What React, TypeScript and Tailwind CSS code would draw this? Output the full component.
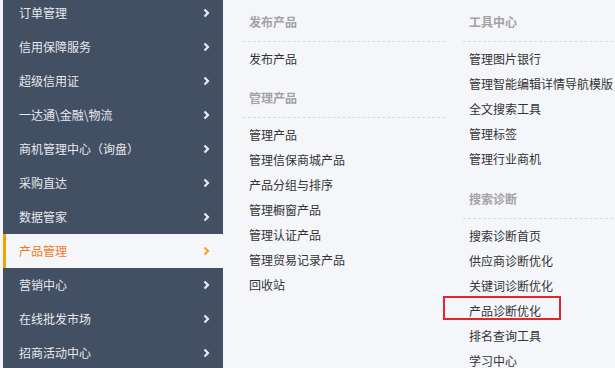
import React from 'react';

const menu = [
  '订单管理',
  '信用保障服务',
  '超级信用证',
  '一达通\\金融\\物流',
  '商机管理中心（询盘）',
  '采购直达',
  '数据管家',
  '产品管理',
  '营销中心',
  '在线批发市场',
  '招商活动中心',
];

const activeIndex = 7;

interface Section {
  title: string;
  items: string[];
}

const col2: Section[] = [
  { title: '发布产品', items: ['发布产品'] },
  {
    title: '管理产品',
    items: ['管理产品', '管理信保商城产品', '产品分组与排序', '管理橱窗产品', '管理认证产品', '管理贸易记录产品', '回收站'],
  },
];

const col3: Section[] = [
  { title: '工具中心', items: ['管理图片银行', '管理智能编辑详情导航模版', '全文搜索工具', '管理标签', '管理行业商机'] },
  {
    title: '搜索诊断',
    items: ['搜索诊断首页', '供应商诊断优化', '关键词诊断优化', '产品诊断优化', '排名查询工具', '学习中心'],
  },
];

const highlighted = '产品诊断优化';

const Chevron: React.FC<{ active?: boolean }> = ({ active }) => (
  <svg width="7" height="10" viewBox="0 0 7 10" className="shrink-0">
    <polyline
      points="1.5,1.5 5,5 1.5,8.5"
      fill="none"
      stroke={active ? '#f5a623' : '#e8ebf0'}
      strokeWidth="2.2"
    />
  </svg>
);

const MenuColumn: React.FC<{ sections: Section[]; gap: string; width: string }> = ({ sections, gap, width }) => (
  <div className={`flex flex-col ${width}`}>
    {sections.map((section, si) => (
      <div key={section.title} className={si > 0 ? gap : ''}>
        <div className="pt-[12px] pb-[9px] pl-[6px] border-b border-dashed border-[#d9dbe0] text-[12px] leading-[20px] font-bold text-[#a3a3a3]">
          {section.title}
        </div>
        <ul className="pt-[4px]">
          {section.items.map(item => (
            <li key={item} className="relative pl-[6px] h-[25px] leading-[25px] text-[12px] text-[#333] whitespace-nowrap">
              {item}
              {item === highlighted && (
                <span className="absolute left-[-20px] top-[-2px] w-[118px] h-[24px] border-2 border-[#e3262d]" />
              )}
            </li>
          ))}
        </ul>
      </div>
    ))}
  </div>
);

const App: React.FC = () => {
  return (
    <div
      className="w-[615px] h-[368px] overflow-hidden bg-[#f5f6fa] flex"
      style={{ fontFamily: '"Noto Sans CJK SC", "Noto Sans", sans-serif' }}
    >
      {/* Side menu */}
      <div className="ml-[3px] w-[220px] mt-[-4px] bg-[#434f63] flex flex-col shrink-0 self-start">
        {menu.map((label, i) => {
          const active = i === activeIndex;
          return (
            <div
              key={label}
              className={
                active
                  ? 'h-[34px] flex items-center justify-between pl-[13px] pr-[13px] bg-[#f5f6fa] border-l-[3px] border-[#f5a100]'
                  : 'h-[34px] flex items-center justify-between pl-[16px] pr-[13px]'
              }
            >
              <span className={active ? 'text-[12px] text-[#f07a1e]' : 'text-[12px] text-[#e6e9ee]'}>{label}</span>
              <Chevron active={active} />
            </div>
          );
        })}
      </div>

      {/* Sub menu */}
      <div className="flex ml-[20px] gap-[18px]">
        <MenuColumn sections={col2} gap="mt-[5px]" width="w-[202px]" />
        <MenuColumn sections={col3} gap="mt-[6px]" width="w-[160px]" />
      </div>
    </div>
  );
};

export default App;
